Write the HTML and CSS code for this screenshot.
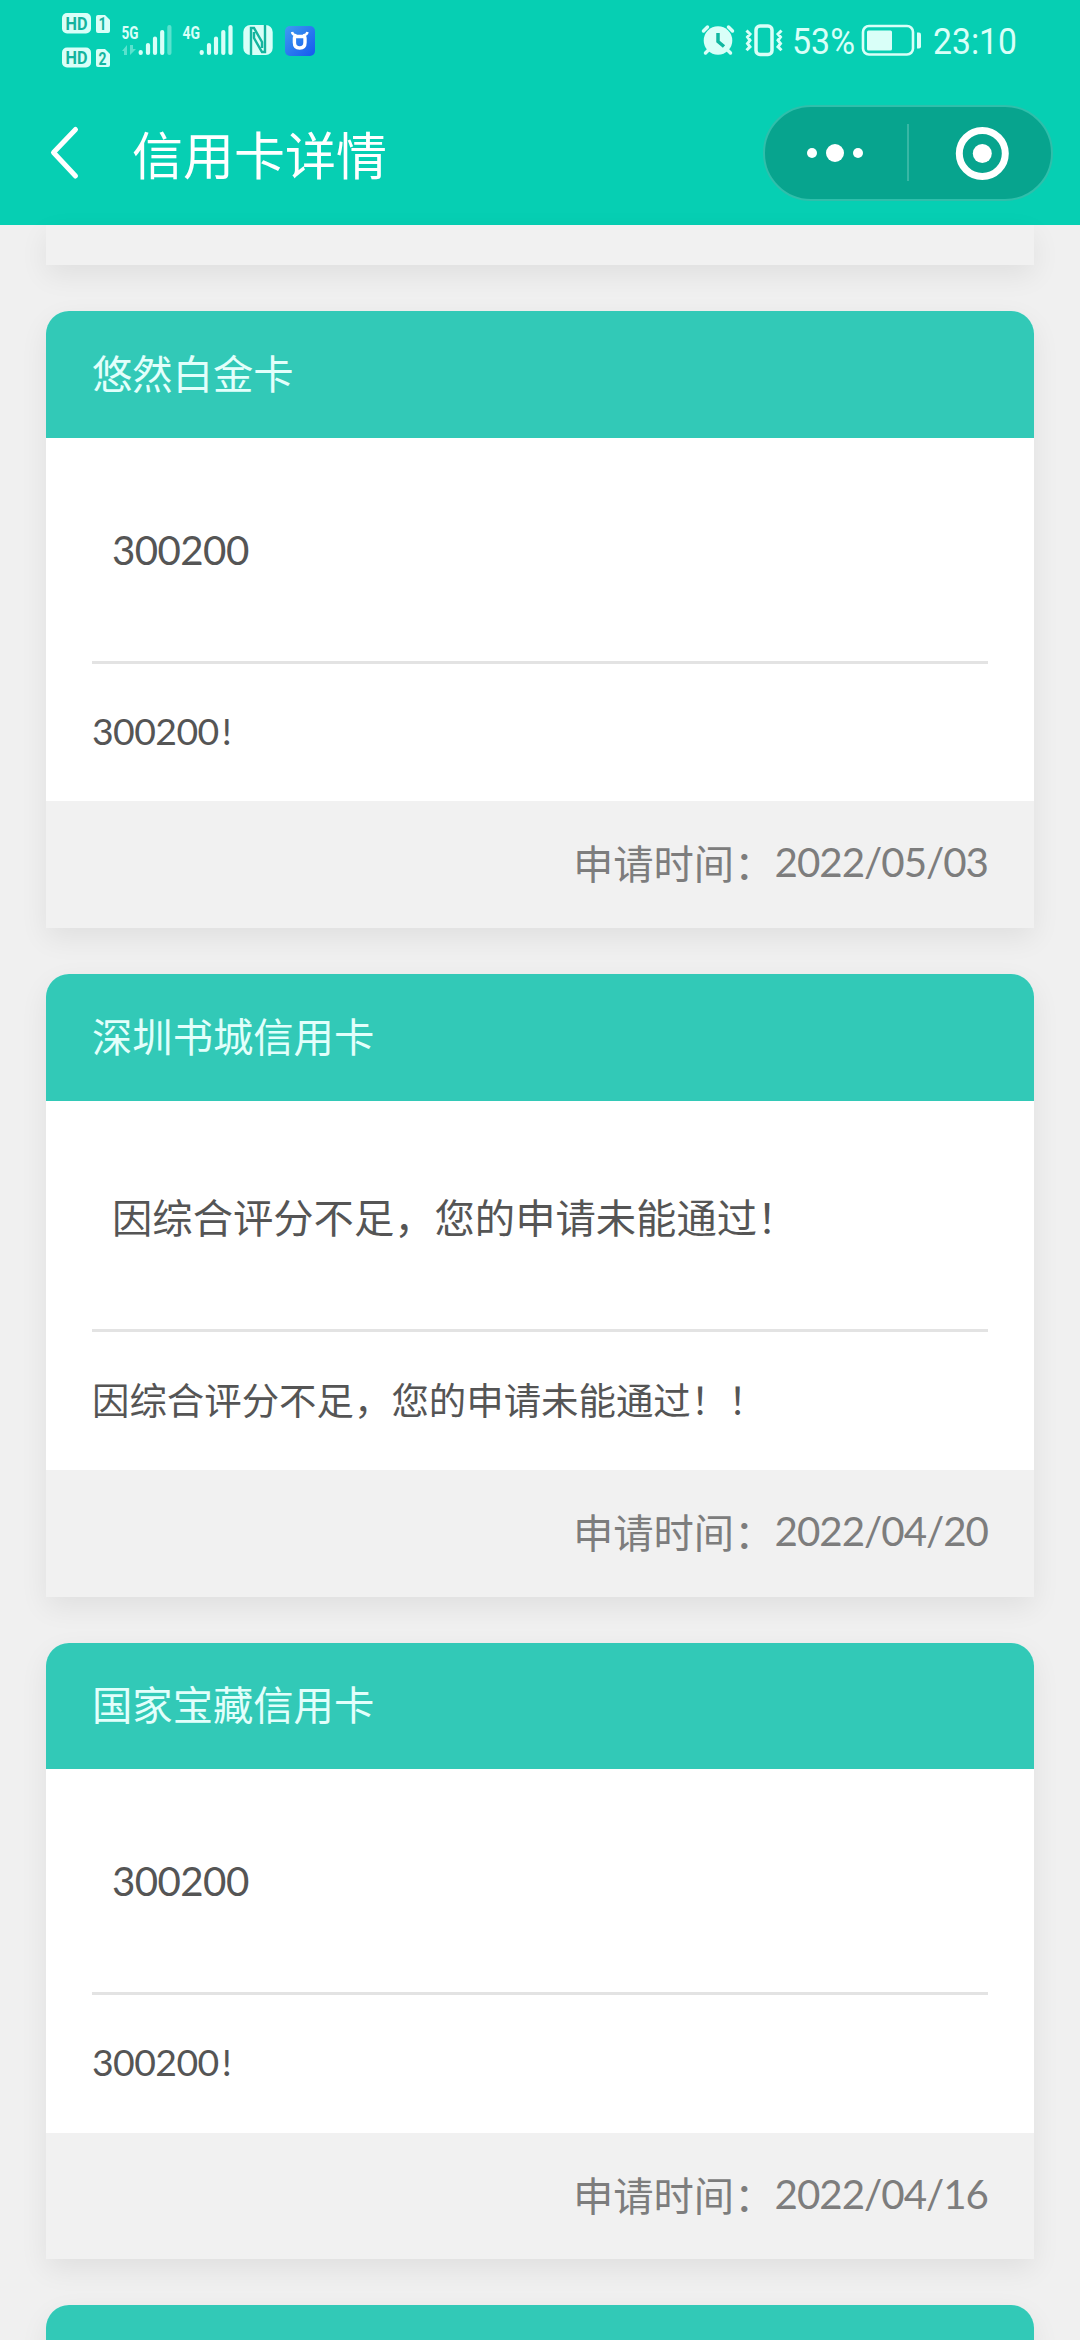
FILE: index.html
```html
<!DOCTYPE html>
<html lang="zh-CN">
<head>
<meta charset="utf-8">
<title>信用卡详情</title>
<link rel="stylesheet" href="styles.css">
</head>
<body>
<div class="screen">
  <header class="top">
    <div class="status">
      <div class="status-left">
        <svg class="ico hd" viewBox="62 10 49 60" width="49" height="60">
          <g class="fill"><rect x="62" y="13" width="29" height="20.500" rx="5"/><path d="M96 17q0-2 2-2h7l5 5v11q0 2-2 2H98q-2 0-2-2z"/><rect x="62" y="47.500" width="29" height="20" rx="5"/><path d="M96 51q0-2 2-2h7l5 5v11q0 2-2 2H98q-2 0-2-2z"/></g>
          <g class="badge-text"><text x="65.500" y="29.800" textLength="22" lengthAdjust="spacingAndGlyphs">HD</text><text x="98.500" y="30.300" textLength="8" lengthAdjust="spacingAndGlyphs">1</text><text x="65.500" y="64" textLength="22" lengthAdjust="spacingAndGlyphs">HD</text><text x="98.500" y="64.500" textLength="8" lengthAdjust="spacingAndGlyphs">2</text></g>
        </svg>
        <svg class="ico signal-5g" viewBox="121 10 51 60" width="51" height="60">
          <text class="net" x="121.500" y="38.500" textLength="17" lengthAdjust="spacingAndGlyphs">5G</text>
          <path class="fill faint" d="M122 51l5-6v10h-3v-4zM130 45h3v4h3l-6 6z"/>
          <g class="bars"><path d="M140.700 52v1M148 45v8M155 38.500V53M162.200 32v21"/><path class="faint" d="M169.400 27v26"/></g>
        </svg>
        <svg class="ico signal-4g" viewBox="182 10 52 60" width="52" height="60">
          <text class="net" x="182.500" y="38.500" textLength="17.500" lengthAdjust="spacingAndGlyphs">4G</text>
          <path class="bars" d="M201.700 52v1M209 45v8M216 38.500V53M223.300 32v21M230.500 27v26"/>
        </svg>
        <svg class="ico nfc" viewBox="243 10 30 60" width="30" height="60">
          <rect class="fill" x="243.300" y="25" width="29.400" height="30" rx="7"/>
          <path class="nfc-line" d="M251 55V28l3 0 8 14v6M265 25v27l-3 0-8-14v-6"/>
        </svg>
        <svg class="ico app" viewBox="285 10 30 60" width="30" height="60">
          <defs><linearGradient id="blue" x1="0" y1="0" x2="1" y2="1"><stop offset="0" stop-color="#3f9cf0"/><stop offset="1" stop-color="#1559ee"/></linearGradient></defs>
          <rect x="285" y="26" width="30" height="30" rx="5" fill="url(#blue)"/>
          <path class="app-line" d="M296 36.500h7.500q1.500 0 1.500 2v4q0 5.500-5.300 5.500t-5.300-5.500v-4q0-2 1.600-2z"/>
          <path class="app-horns" d="M292 32q.5 3 4.500 3.500M307.500 32q-.5 3-4.500 3.500"/>
        </svg>
      </div>
      <div class="status-right">
        <svg class="ico alarm" viewBox="701 10 34 60" width="34" height="60">
          <circle class="fill" cx="718" cy="40.500" r="14.300"/>
          <path class="line" d="M703.500 31l4-4M732.500 31l-4-4M708.500 50l-3 3M727.500 50l3 3"/>
          <path class="hands" d="M718 33v8.500l6 5"/>
        </svg>
        <svg class="ico vibrate" viewBox="745 10 38 60" width="38" height="60">
          <rect class="line" x="756" y="26" width="16" height="28.500" rx="4"/>
          <path class="wiggle" d="M746.500 30.500l3.500 3.500-2.500 3 2.500 3.300-2.500 3.300 2.500 3.200-3.500 3.500M781.500 30.500l-3.500 3.500 2.500 3-2.500 3.300 2.500 3.300-2.500 3.200 3.500 3.500"/>
        </svg>
        <svg class="ico percent" viewBox="790 10 68 60" width="68" height="60"><text class="status-text" x="792" y="54" textLength="63" lengthAdjust="spacingAndGlyphs">53%</text></svg>
        <svg class="ico battery" viewBox="861 10 61 60" width="61" height="60">
          <rect class="outline" x="863" y="26" width="50" height="28.500" rx="6"/>
          <rect class="fill" x="867" y="30.500" width="25" height="20" rx="1.500"/>
          <path class="fill" d="M917 32.500h2q2 0 2 2v12q0 2-2 2h-2z"/>
        </svg>
        <svg class="ico clock" viewBox="928 10 94 60" width="94" height="60"><text class="status-text" x="933" y="54" textLength="84" lengthAdjust="spacingAndGlyphs">23:10</text></svg>
      </div>
    </div>
    <div class="nav">
      <svg class="back" viewBox="0 0 28 52" width="28" height="52"><path d="M25.500 2.500 3.500 25.500 25.500 49"/></svg>
      <h1 class="nav-title">信用卡详情</h1>
      <div class="capsule">
        <svg viewBox="0 0 286 92" width="286" height="92">
          <g fill="#fff"><circle cx="47" cy="46" r="5"/><circle cx="70" cy="46" r="9"/><circle cx="93" cy="46" r="5"/><circle cx="217.300" cy="46.500" r="9.500"/></g>
          <path d="M143 17v57" stroke="#38b7a5" stroke-width="2"/>
          <circle cx="217.300" cy="46.500" r="23" fill="none" stroke="#fff" stroke-width="7"/>
        </svg>
      </div>
    </div>
  </header>
  <main class="list">
    <article class="card card-tail"></article>
    <article class="card">
      <h2 class="card-head">悠然白金卡</h2>
      <div class="card-body">
        <p class="result"><span class="digits">300200</span></p>
        <p class="note"><span class="digits">300200</span><span class="mark">!</span></p>
      </div>
      <footer class="card-foot">申请时间：<span class="date">2022/05/03</span></footer>
    </article>
    <article class="card">
      <h2 class="card-head">深圳书城信用卡</h2>
      <div class="card-body">
        <p class="result result-long">因综合评分不足，您的申请未能通过！</p>
        <p class="note note-long">因综合评分不足，您的申请未能通过！！</p>
      </div>
      <footer class="card-foot">申请时间：<span class="date">2022/04/20</span></footer>
    </article>
    <article class="card card-compact">
      <h2 class="card-head">国家宝藏信用卡</h2>
      <div class="card-body">
        <p class="result"><span class="digits">300200</span></p>
        <p class="note note-long"><span class="digits">300200</span><span class="mark">!</span></p>
      </div>
      <footer class="card-foot">申请时间：<span class="date">2022/04/16</span></footer>
    </article>
    <article class="card"><div class="card-head"></div></article>
  </main>
</div>
</body>
</html>
```
FILE: styles.css
```css
* { box-sizing: border-box; }
body {
  margin: 0;
  background: #f0f0f0;
  font-family: Lato, "Noto Sans CJK SC", sans-serif;
}
h1, h2, p { margin: 0; font-weight: 400; }
svg { display: block; flex: none; overflow: visible; }
.screen {
  width: 1080px;
  height: 2340px;
  overflow: hidden;
  display: flex;
  flex-direction: column;
}

/* status bar and navigation */
.top {
  flex: none;
  height: 225px;
  background: #06cfb3;
}
.status {
  height: 80px;
  padding: 10px 58px 0 62px;
  display: flex;
  justify-content: space-between;
}
.status-left, .status-right { display: flex; }
.signal-5g { margin-left: 10px; }
.signal-4g { margin-left: 10px; }
.nfc { margin-left: 9px; }
.app { margin-left: 12px; }
.vibrate { margin-left: 10px; }
.percent { margin-left: 7px; }
.battery { margin-left: 3px; }
.clock { margin-left: 6px; }
.fill { fill: #d9fff8; }
.faint { opacity: .4; }
.badge-text { font: 700 19px Roboto, sans-serif; fill: #14b49e; }
.net { font: 700 19px Roboto, sans-serif; fill: #d9fff8; }
.status-text { font: 400 36px Roboto, sans-serif; fill: #d9fff8; }
.bars { stroke: #d9fff8; stroke-width: 4.2; stroke-linecap: round; fill: none; }
.nfc-line { stroke: #14b49e; stroke-width: 2.4; fill: none; }
.app-line { stroke: #fff; stroke-width: 3.4; fill: none; }
.app-horns { stroke: #fff; stroke-width: 2.4; fill: none; }
.line { stroke: #d9fff8; stroke-width: 3.5; stroke-linecap: round; fill: none; }
.outline { stroke: #d9fff8; stroke-width: 2.6; fill: none; }
.hands { stroke: #10b7a0; stroke-width: 3.5; fill: none; }
.wiggle { stroke: #d9fff8; stroke-width: 3; fill: none; }

.nav {
  height: 145px;
  padding: 0 27px 0 50px;
  display: flex;
  align-items: center;
}
.back path { stroke: #fff; stroke-width: 5; fill: none; stroke-linecap: round; stroke-linejoin: round; }
.nav-title {
  margin-left: 54px;
  padding-top: 6px;
  font-size: 51px;
  line-height: 70px;
  color: #fff;
}
.capsule {
  margin-left: auto;
  width: 290px;
  height: 96px;
  border: 2px solid #2fbfab;
  border-radius: 48px;
  background: #07a48e;
}

/* record cards */
.list {
  padding: 0 46px;
  display: flex;
  flex-direction: column;
  gap: 46px;
}
.card {
  flex: none;
  border-radius: 23px 23px 0 0;
  background: #fff;
  box-shadow: 0 10px 29px rgba(0, 0, 0, .07);
}
.card-tail {
  height: 40px;
  border-radius: 0;
  background: #f1f1f1;
}
.card-head {
  height: 127px;
  padding: 0 46px 7px;
  display: flex;
  align-items: center;
  border-radius: 23px 23px 0 0;
  background: #32c9b7;
  color: #e2fffb;
  font-size: 40.32px;
}
.card-body {
  padding: 0 46px;
  color: #555;
}
.result {
  height: 226px;
  padding: 0 20px;
  display: flex;
  align-items: center;
  border-bottom: 3px solid #e3e3e3;
  font-size: 40.32px;
}
.result-long { height: 231px; }
.digits { letter-spacing: -.6px; }
.mark { margin-left: 3px; }
.note {
  height: 137px;
  padding-bottom: 5px;
  display: flex;
  align-items: center;
  font-size: 37.44px;
}
.note-long { height: 138px; }
.card-foot {
  height: 127px;
  padding: 0 46px 6px;
  display: flex;
  align-items: center;
  justify-content: flex-end;
  background: #f1f1f1;
  color: #7d7d7d;
  font-size: 40.32px;
}
.date { letter-spacing: -1px; }
.card-compact .card-head,
.card-compact .card-foot { height: 126px; }
```
